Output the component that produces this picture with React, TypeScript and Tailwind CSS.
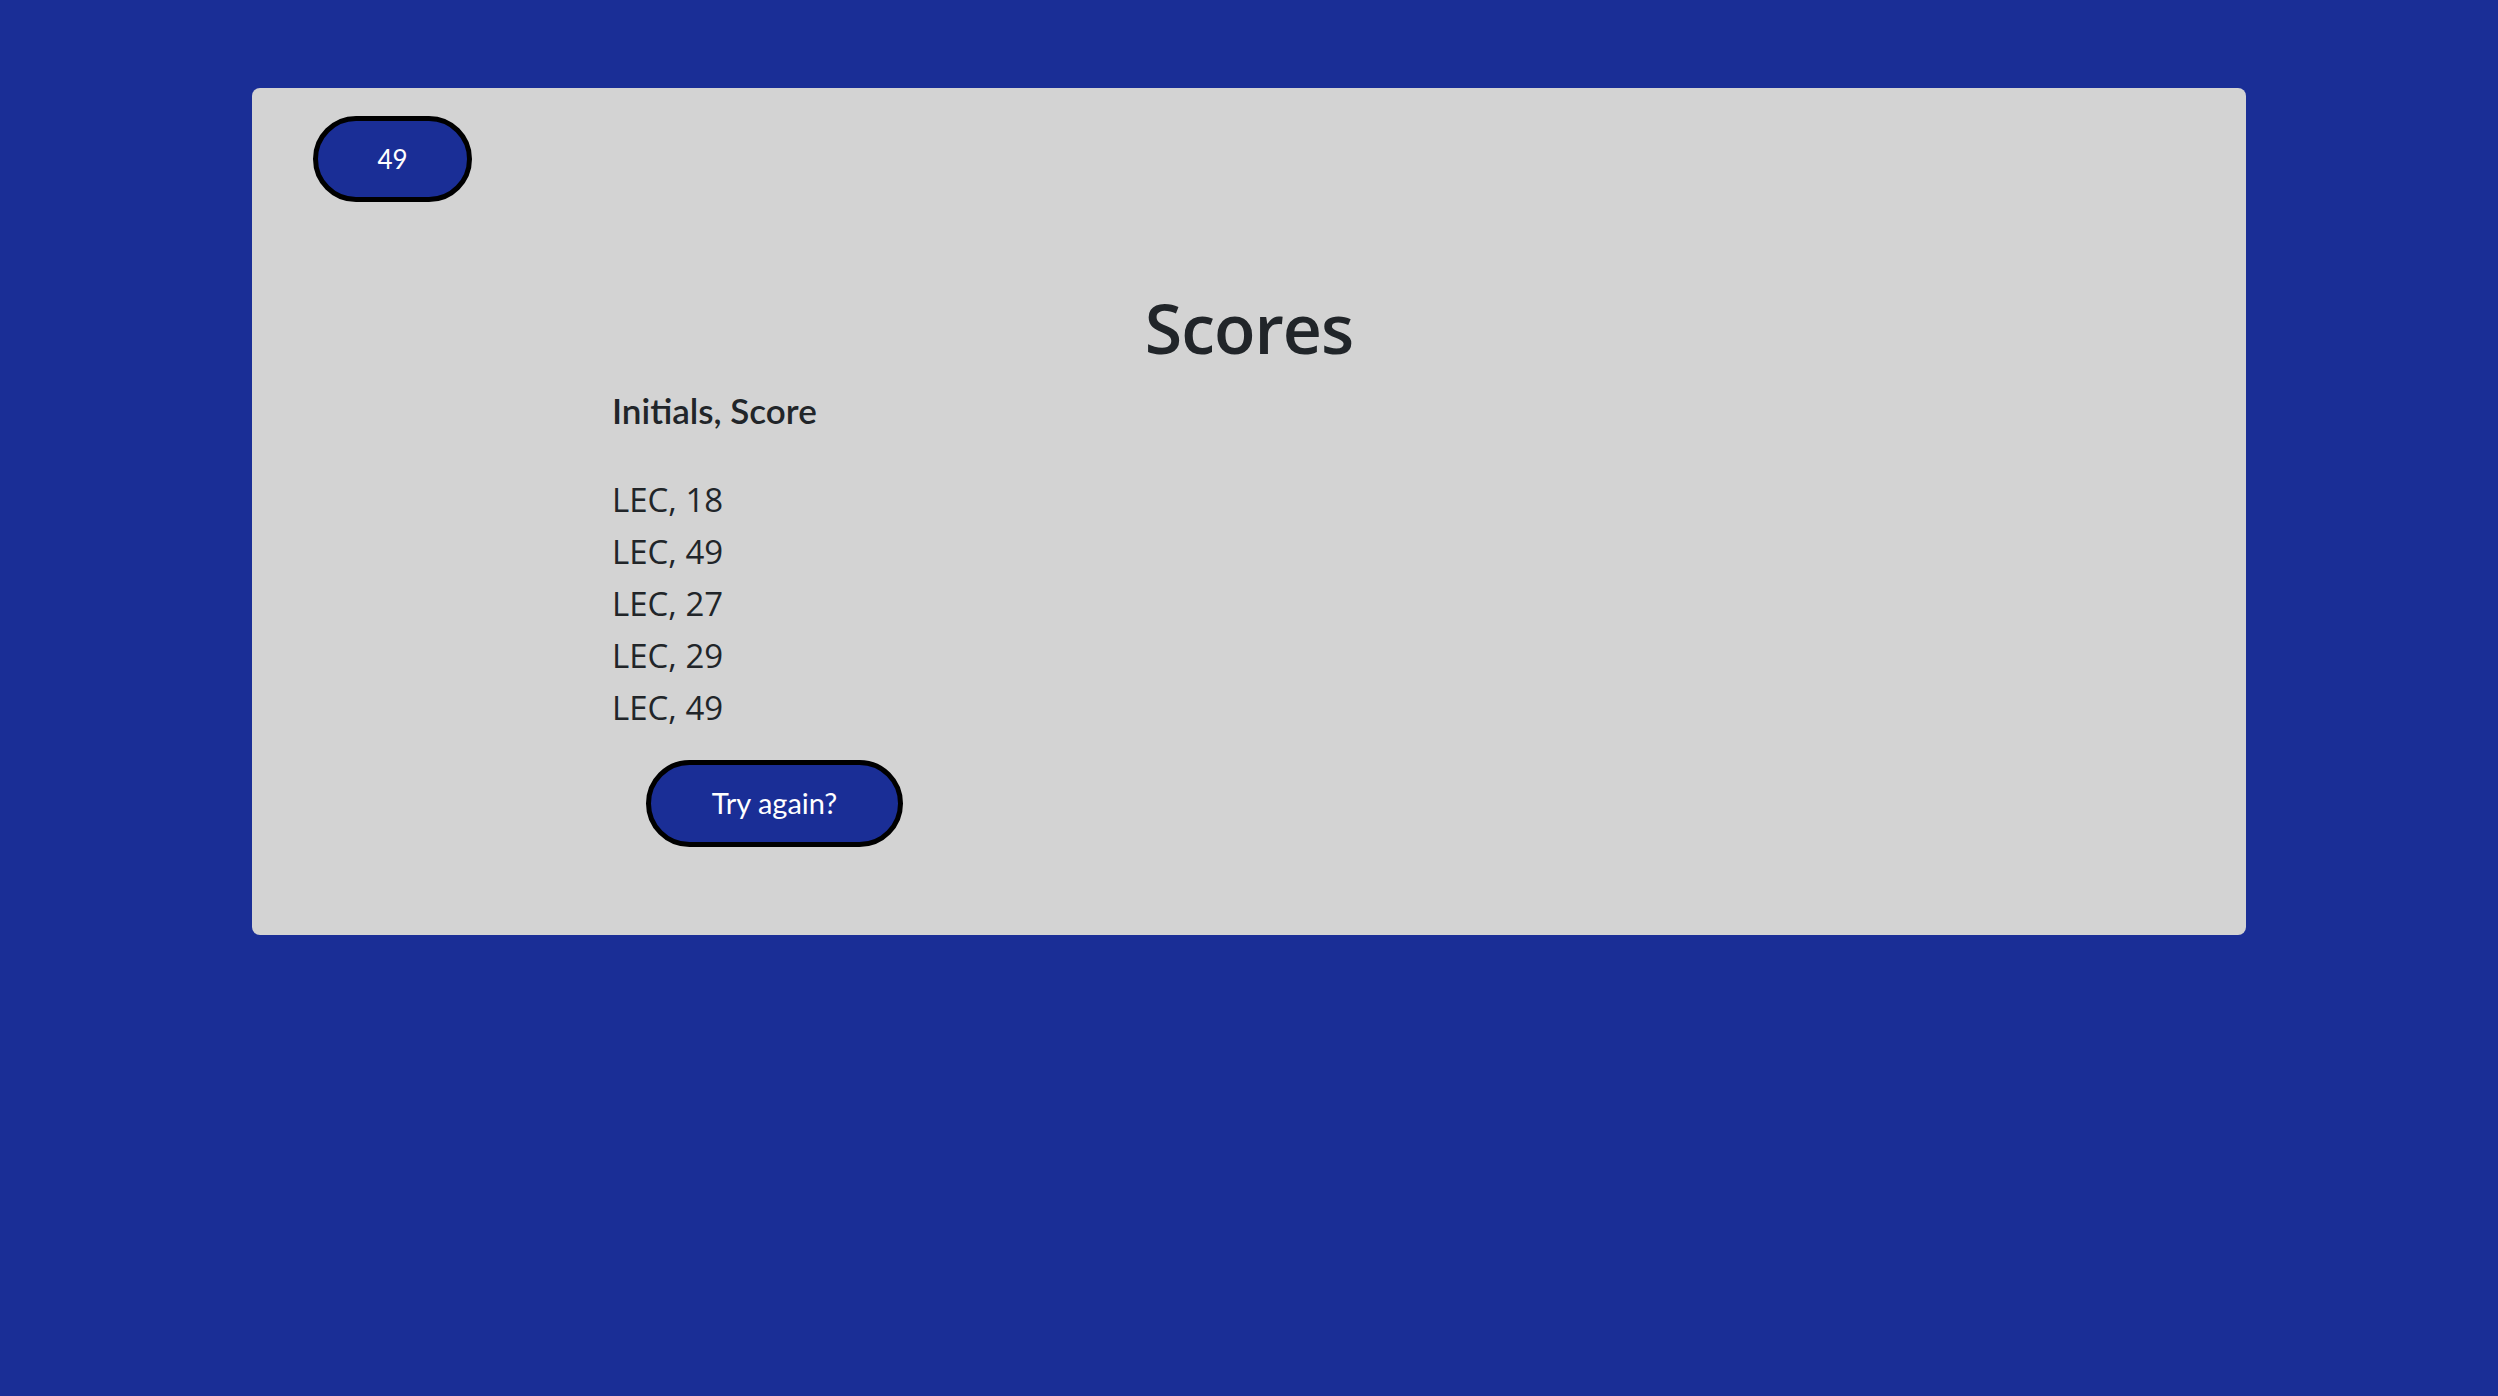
import React from 'react';

const scores = [
  { initials: 'LEC', score: 18 },
  { initials: 'LEC', score: 49 },
  { initials: 'LEC', score: 27 },
  { initials: 'LEC', score: 29 },
  { initials: 'LEC', score: 49 },
];

const App: React.FC = () => {
  return (
    <div className="min-h-screen w-full bg-[#1a2e96] pt-[88px] font-['Open_Sans',sans-serif]">
      <div className="mx-[252px] h-[847px] rounded-[8px] bg-[#d3d3d3]">
        {/* timer */}
        <div className="pl-[61px] pt-[28px]">
          <div className="flex h-[86px] w-[159px] items-center justify-center rounded-full border-[5px] border-black bg-[#1a2e96] font-['Lato',sans-serif] text-[26px] text-white">
            49
          </div>
        </div>

        <h1 className="mt-[85px] text-center text-[68px] font-semibold leading-[1.2] tracking-[-1px] text-[#212529]">
          Scores
        </h1>

        <div className="pl-[360px]">
          <h3 className="mt-[20px] font-['Lato',sans-serif] text-[35px] font-semibold leading-[1.2] text-[#212529]">
            Initials, Score
          </h3>

          <ul className="mt-[43px]">
            {scores.map((s, i) => (
              <li key={i} className="text-[33px] leading-[52px] text-[#212529]">
                {s.initials}, {s.score}
              </li>
            ))}
          </ul>

          <button className="ml-[34px] mt-[26px] flex h-[87px] w-[257px] items-center justify-center rounded-full border-[5px] border-black bg-[#1a2e96] font-['Lato',sans-serif] text-[29px] text-white">
            Try again?
          </button>
        </div>
      </div>
    </div>
  );
};

export default App;
